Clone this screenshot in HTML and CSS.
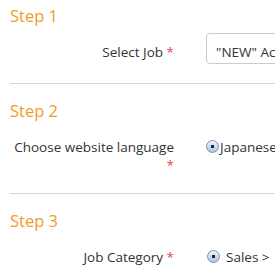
FILE: index.html
```html
<!DOCTYPE html>
<html lang="en">
<head>
  <meta charset="UTF-8" />
  <title>Job Application</title>
  <meta name="viewport" content="width=device-width, initial-scale=1.0" />
  <link rel="stylesheet" href="styles.css">
</head>
<body>
  <form class="apply">
    <div class="step">
      <h2>Step 1</h2>
      <div class="row">
        <label class="field-label" for="job">Select Job <span class="req">*</span></label>
        <input type="text" id="job" class="field" value="&quot;NEW&quot; Account Executive">
      </div>
    </div>

    <div class="step">
      <h2>Step 2</h2>
      <div class="row">
        <label class="field-label">Choose website language <span class="req">*</span></label>
        <span class="option tight"><span class="radio"></span>Japanese</span>
      </div>
    </div>

    <div class="step">
      <h2>Step 3</h2>
      <div class="row">
        <label class="field-label">Job Category <span class="req">*</span></label>
        <span class="option"><span class="radio"></span>Sales &gt;</span>
      </div>
    </div>
  </form>
</body>
</html>
```

FILE: styles.css
```css
html, body {
  margin: 0;
  overflow: hidden;
}
body {
  font-family: 'Open Sans', sans-serif;
  background: #fff;
  color: #333;
  padding: 6px 0 0 10px;
}
.apply {
  width: 600px;
}
.step {
  border-bottom: 1px solid #d8d8d8;
  padding: 17px 0 19px;
}
.step:first-child {
  padding-top: 0;
}
h2 {
  margin: 0;
  font-size: 16.5px;
  line-height: 20px;
  font-weight: normal;
  color: #f29b26;
}
.row {
  display: flex;
  align-items: baseline;
  margin-top: 7px;
}
.field-label {
  width: 164px;
  margin-right: 32px;
  padding-top: 10px;
  text-align: right;
  font-size: 13.5px;
  line-height: 18px;
  color: #333;
}
.req {
  color: #e0474c;
}
.field {
  width: 360px;
  height: 31px;
  box-sizing: border-box;
  padding: 9px 9px 2px;
  border: 1px solid #ccc;
  border-radius: 4px;
  font-family: 'Open Sans', sans-serif;
  font-size: 13.5px;
  line-height: 18px;
  color: #333;
}
.option {
  font-size: 13.5px;
  line-height: 18px;
  white-space: nowrap;
}
.radio {
  display: inline-block;
  width: 11px;
  height: 11px;
  margin: 0 6px 0 1px;
  vertical-align: -1px;
  border: 1px solid #7f90aa;
  border-radius: 50%;
  background: radial-gradient(circle, #1d2630 0 1.4px, transparent 2px), linear-gradient(#eef4fb, #a7c5e8);
}
.tight .radio {
  margin: 0 1px 0 0;
}
```
